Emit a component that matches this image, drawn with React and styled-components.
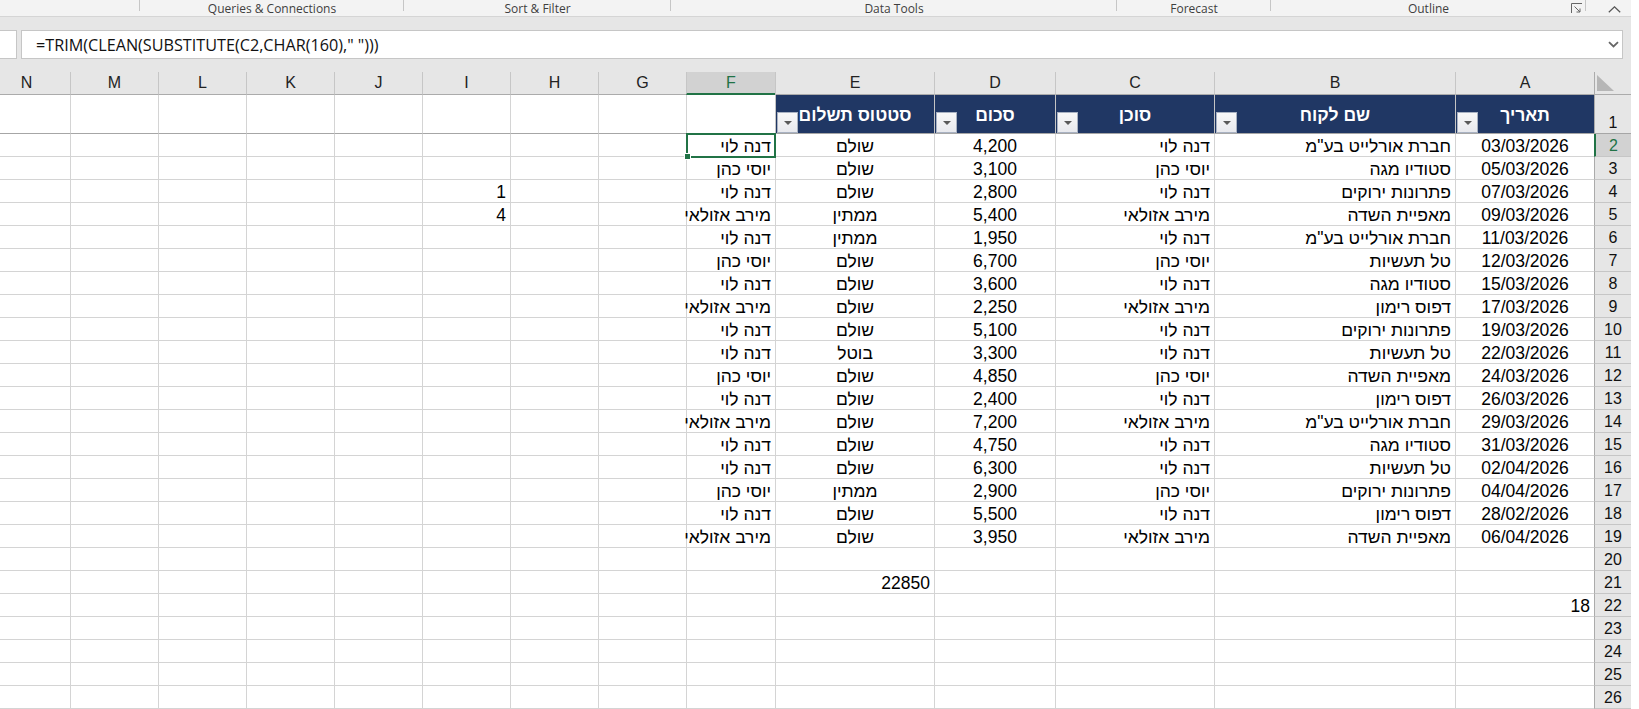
import React from 'react';
import styled, { createGlobalStyle } from 'styled-components';

const GREEN = '#217346';
const GRID = '#d4d4d4';
const HEAD_LINE = '#ababab';

const GlobalStyle = createGlobalStyle`
  html, body {
    margin: 0;
    padding: 0;
  }
  body {
    background: #ffffff;
    font-family: "Liberation Sans", Arial, "DejaVu Sans", sans-serif;
    overflow: hidden;
  }
`;

const Window = styled.div`
  width: 1639px;
  height: 709px;
  display: flex;
  overflow: hidden;
  background: #ffffff;
`;

const Workspace = styled.div`
  width: 1631px;
  flex: none;
  display: flex;
  flex-direction: column;
  background: #e6e6e6;
  overflow: hidden;
`;

/* ribbon group captions, the ribbon itself is scrolled off the top */
const RibbonCaptions = styled.div`
  height: 16px;
  flex: none;
  display: flex;
  background: #f3f3f3;
  border-bottom: 1px solid #d5d5d5;
  font-family: "Open Sans", "Noto Sans", sans-serif;
  font-size: 12px;
  color: #3f3f3f;
`;

const Group = styled.div`
  width: ${p => p.$w}px;
  flex: none;
  position: relative;
  display: flex;
  align-items: flex-start;
  justify-content: center;
  box-sizing: border-box;
  padding-top: 1px;
  line-height: 15px;

  ${p => p.$sep && `
    &::after {
      content: '';
      position: absolute;
      right: 0;
      top: 0;
      width: 1px;
      height: 11px;
      background: #c6c6c6;
    }
  `}
`;

const CollapseArea = styled.div`
  flex: 1;
  display: flex;
  align-items: flex-start;
  justify-content: flex-end;
  padding: 6px 10px 0 0;
`;

const Launcher = styled.span`
  position: absolute;
  right: 3px;
  top: 3px;
  display: flex;
`;

const FormulaRow = styled.div`
  height: 29px;
  flex: none;
  margin: 13px 0;
  padding-right: 8px;
  display: flex;
  gap: 4px;
`;

const NameBoxEdge = styled.div`
  width: 17px;
  box-sizing: border-box;
  background: #ffffff;
  border: 1px solid #c6c6c6;
  border-left: none;
`;

const FormulaInput = styled.div`
  flex: 1;
  box-sizing: border-box;
  background: #ffffff;
  border: 1px solid #c6c6c6;
  display: flex;
  align-items: center;
  padding: 0 3px 0 14px;
  font-family: "Open Sans", "Noto Sans", sans-serif;
  font-size: 16.2px;
  color: #111111;
  white-space: pre;
`;

const Expand = styled.span`
  margin-left: auto;
  display: flex;
`;

const Sheet = styled.div`
  direction: rtl;
  flex: 1;
  display: grid;
  grid-template-columns: 37px 139px 241px 159px 121px 159px 89px repeat(8, 88px);
  grid-template-rows: 23px 39px repeat(25, 23px);
  background: #ffffff;
  overflow: hidden;
  font-size: 17.5px;
  line-height: 18px;
  color: #000000;
`;

const Corner = styled.div`
  background: #e6e6e6;
  border-left: 1px solid ${HEAD_LINE};
  border-bottom: 1px solid ${HEAD_LINE};
  display: flex;
  align-items: flex-end;
  justify-content: flex-end;
  padding: 0 2px 3px 2px;
`;

const ColHead = styled.div`
  background: ${p => (p.$active ? '#d2d2d2' : '#e6e6e6')};
  color: ${p => (p.$active ? GREEN : '#222222')};
  border-left: 1px solid #c6c6c6;
  border-bottom: ${p => (p.$active ? `2px solid ${GREEN}` : `1px solid ${HEAD_LINE}`)};
  display: flex;
  align-items: center;
  justify-content: center;
  font-size: 16px;
`;

const RowHead = styled.div`
  background: ${p => (p.$active ? '#d2d2d2' : '#e6e6e6')};
  color: ${p => (p.$active ? GREEN : '#111111')};
  border-left: ${p => (p.$active ? `2px solid ${GREEN}` : `1px solid ${HEAD_LINE}`)};
  border-bottom: 1px solid ${p => (p.$frozen ? '#a6a6a6' : '#c6c6c6')};
  display: flex;
  align-items: flex-end;
  justify-content: center;
  padding-bottom: 1px;
  font-size: 16px;
`;

const Cell = styled.div`
  position: relative;
  border-left: 1px solid ${GRID};
  border-bottom: 1px solid ${p => (p.$frozen ? '#a6a6a6' : GRID)};
  display: flex;
  align-items: flex-end;
  justify-content: ${p => (p.$align === 'center' ? 'center' : 'flex-start')};
  padding: 0 4px 1px;
  white-space: nowrap;
  min-width: 0;

  ${p => p.$selected && `
    &::before {
      content: '';
      position: absolute;
      top: -1px;
      right: -1px;
      bottom: -2px;
      left: -1px;
      border: 2px solid ${GREEN};
      z-index: 2;
    }
    &::after {
      content: '';
      position: absolute;
      left: -3px;
      bottom: -4px;
      width: 5px;
      height: 5px;
      background: ${GREEN};
      border: 1px solid #ffffff;
      z-index: 3;
    }
  `}
`;

const TableHead = styled.div`
  position: relative;
  background: #203764;
  color: #ffffff;
  font-weight: bold;
  border-left: 1px solid #c4c4c4;
  border-bottom: 1px solid #a6a6a6;
  display: flex;
  align-items: center;
  justify-content: center;
  padding-top: 2px;
`;

const FilterButton = styled.span`
  position: absolute;
  left: 1px;
  bottom: 0;
  width: 21px;
  height: 21px;
  box-sizing: border-box;
  border: 1px solid #a9b2c2;
  background: linear-gradient(#f8f8f8, #e8e9ee);
  display: flex;
  align-items: center;
  justify-content: center;

  &::after {
    content: '';
    border-left: 4px solid transparent;
    border-right: 4px solid transparent;
    border-top: 4px solid #5a5a5a;
  }
`;

const LETTERS = ['A', 'B', 'C', 'D', 'E', 'F', 'G', 'H', 'I', 'J', 'K', 'L', 'M', 'N'];
const HEADERS = ['תאריך', 'שם לקוח', 'סוכן', 'סכום', 'סטטוס תשלום'];
const ALIGN = ['center', 'right', 'right', 'center', 'center', 'right'];

const ROWS = [
  ['03/03/2026', 'חברת אורלייט בע"מ', 'דנה לוי', '4,200', 'שולם', 'דנה לוי'],
  ['05/03/2026', 'סטודיו מגה', 'יוסי כהן', '3,100', 'שולם', 'יוסי כהן'],
  ['07/03/2026', 'פתרונות ירוקים', 'דנה לוי', '2,800', 'שולם', 'דנה לוי'],
  ['09/03/2026', 'מאפיית השדה', 'מירב אזולאי', '5,400', 'ממתין', 'מירב אזולאי'],
  ['11/03/2026', 'חברת אורלייט בע"מ', 'דנה לוי', '1,950', 'ממתין', 'דנה לוי'],
  ['12/03/2026', 'טל תעשיות', 'יוסי כהן', '6,700', 'שולם', 'יוסי כהן'],
  ['15/03/2026', 'סטודיו מגה', 'דנה לוי', '3,600', 'שולם', 'דנה לוי'],
  ['17/03/2026', 'דפוס רימון', 'מירב אזולאי', '2,250', 'שולם', 'מירב אזולאי'],
  ['19/03/2026', 'פתרונות ירוקים', 'דנה לוי', '5,100', 'שולם', 'דנה לוי'],
  ['22/03/2026', 'טל תעשיות', 'דנה לוי', '3,300', 'בוטל', 'דנה לוי'],
  ['24/03/2026', 'מאפיית השדה', 'יוסי כהן', '4,850', 'שולם', 'יוסי כהן'],
  ['26/03/2026', 'דפוס רימון', 'דנה לוי', '2,400', 'שולם', 'דנה לוי'],
  ['29/03/2026', 'חברת אורלייט בע"מ', 'מירב אזולאי', '7,200', 'שולם', 'מירב אזולאי'],
  ['31/03/2026', 'סטודיו מגה', 'דנה לוי', '4,750', 'שולם', 'דנה לוי'],
  ['02/04/2026', 'טל תעשיות', 'דנה לוי', '6,300', 'שולם', 'דנה לוי'],
  ['04/04/2026', 'פתרונות ירוקים', 'יוסי כהן', '2,900', 'ממתין', 'יוסי כהן'],
  ['28/02/2026', 'דפוס רימון', 'דנה לוי', '5,500', 'שולם', 'דנה לוי'],
  ['06/04/2026', 'מאפיית השדה', 'מירב אזולאי', '3,950', 'שולם', 'מירב אזולאי'],
];

// loose values typed outside the table, keyed by row then column index
const EXTRA = {
  4: { 8: '1' },
  5: { 8: '4' },
  21: { 4: '22850' },
  22: { 0: '18' },
};

const GROUPS = [
  { w: 140, label: '' },
  { w: 264, label: 'Queries & Connections' },
  { w: 267, label: 'Sort & Filter' },
  { w: 446, label: 'Data Tools' },
  { w: 154, label: 'Forecast' },
  { w: 315, label: 'Outline', launcher: true },
];

const LauncherIcon = () => (
  <svg width="12" height="11" viewBox="0 0 12 11">
    <path d="M0.5 10V0.5H11" fill="none" stroke="#666" strokeWidth="1" />
    <path d="M3.5 3.5L9 9M9 5.5V9H5.5" fill="none" stroke="#666" strokeWidth="1" />
  </svg>
);

const CaretUp = () => (
  <svg width="13" height="7" viewBox="0 0 13 7">
    <path d="M0.8 6.2L6.5 0.8L12.2 6.2" fill="none" stroke="#555" strokeWidth="1.2" />
  </svg>
);

const ChevronDown = () => (
  <svg width="11" height="7" viewBox="0 0 11 7">
    <path d="M1 1.2L5.5 5.4L10 1.2" fill="none" stroke="#666" strokeWidth="1.8" />
  </svg>
);

const SelectAll = () => (
  <svg width="17" height="16" viewBox="0 0 17 16">
    <polygon points="0,0 0,16 17,16" fill="#b6b6b6" />
  </svg>
);

const App = () => {
  const body = [];
  for (let r = 2; r <= 26; r += 1) {
    const data = ROWS[r - 2];
    const extra = EXTRA[r] || {};
    body.push(
      <RowHead key={`h${r}`} $active={r === 2}>{r}</RowHead>
    );
    LETTERS.forEach((l, c) => {
      const value = data && c < 6 ? data[c] : extra[c];
      const align = data && c < 6 ? ALIGN[c] : 'right';
      body.push(
        <Cell key={`${l}${r}`} $align={align} $selected={r === 2 && l === 'F'}>
          {value}
        </Cell>
      );
    });
  }

  return (
    <Window>
      <GlobalStyle />
      <Workspace>
        <RibbonCaptions>
          {GROUPS.map(g => (
            <Group key={g.w} $w={g.w} $sep>
              {g.label}
              {g.launcher && (
                <Launcher>
                  <LauncherIcon />
                </Launcher>
              )}
            </Group>
          ))}
          <CollapseArea>
            <CaretUp />
          </CollapseArea>
        </RibbonCaptions>

        <FormulaRow>
          <NameBoxEdge />
          <FormulaInput>
            {'=TRIM(CLEAN(SUBSTITUTE(C2,CHAR(160)," ")))'}
            <Expand>
              <ChevronDown />
            </Expand>
          </FormulaInput>
        </FormulaRow>

        <Sheet>
          <Corner>
            <SelectAll />
          </Corner>
          {LETTERS.map(l => (
            <ColHead key={l} $active={l === 'F'}>{l}</ColHead>
          ))}

          <RowHead $frozen>1</RowHead>
          {HEADERS.map(h => (
            <TableHead key={h}>
              {h}
              <FilterButton />
            </TableHead>
          ))}
          {LETTERS.slice(5).map(l => (
            <Cell key={`${l}1`} $frozen />
          ))}

          {body}
        </Sheet>
      </Workspace>
    </Window>
  );
};

export default App;
